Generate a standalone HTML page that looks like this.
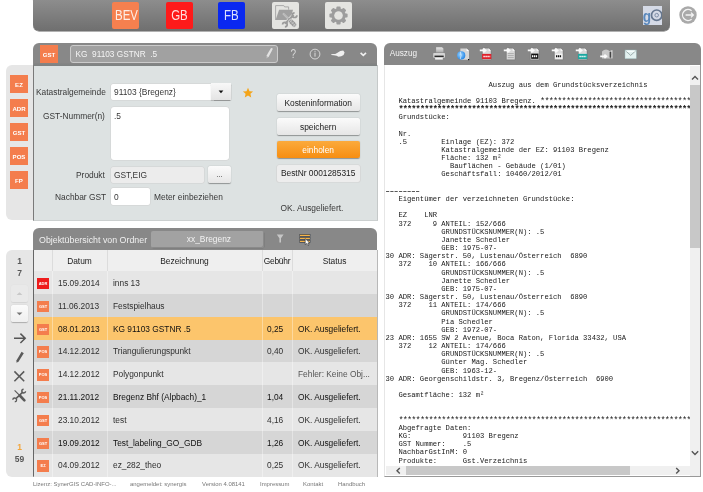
<!DOCTYPE html>
<html><head><meta charset="utf-8">
<style>
*{margin:0;padding:0;box-sizing:border-box}
html,body{width:703px;height:492px;overflow:hidden;background:#fff;font-family:"Liberation Sans",sans-serif;color:#333}
.a{position:absolute}
#topbar{left:33px;top:-6px;width:637px;height:37.4px;border-radius:6px;background:linear-gradient(#8d8d8d 6px,#6f6f6f);box-shadow:0 0.6px 0 #646464}
.tb{position:absolute;top:2px;width:27px;height:27px;border-radius:2px;color:#f2f2f2;font-size:14.5px;text-align:center;line-height:27px}
.tb b{display:inline-block;font-weight:normal;transform:scaleX(0.79);color:rgba(255,255,255,0.86)}
.hdr{background:#888}
.badge{position:absolute;width:18px;height:18px;background:#f47d4d;color:#fff;font-weight:bold;font-size:6.1px;text-align:center;line-height:20px}
.lbl{position:absolute;font-size:8.4px;color:#383838;white-space:nowrap}
.btn{position:absolute;left:276.5px;width:83.3px;height:17.4px;border-radius:2px;font-size:8.4px;text-align:center;line-height:18.6px;background:linear-gradient(#fbfbfb,#e6e6e6);box-shadow:0 0.5px 1px rgba(0,0,0,.35);color:#222}
.row{position:absolute;left:34px;width:343px;height:23px;font-size:8.35px;color:#303030}
.row span{position:absolute;top:0.9px;line-height:23px;white-space:nowrap}
.ic{position:absolute;left:3.3px;top:6.9px;width:11.5px;height:11.3px;background:#f47d4d;font-style:normal;font-size:4px;color:#fff;font-weight:bold;text-align:center;line-height:11px}
.mono{position:absolute;left:385.5px;top:80px;font-family:"Liberation Mono",monospace;font-size:7.17px;line-height:8.17px;white-space:pre;color:#202020}
.st{font-size:8.6px;letter-spacing:-0.86px;font-weight:bold;position:relative;top:1.2px}
.st2{font-size:8.6px;letter-spacing:-0.86px;font-weight:normal;position:relative;top:1.2px}
.ft{position:absolute;top:480.6px;font-size:5.95px;color:#777;white-space:nowrap}
#wrap{position:absolute;left:0;top:0;width:703px;height:492px;will-change:transform}
</style></head><body><div id="wrap">

<!-- top bar -->
<div id="topbar" class="a"></div>
<div class="tb" style="left:112px;background:#f5804f"><b>BEV</b></div>
<div class="tb" style="left:166px;background:#fe1a1a"><b>GB</b></div>
<div class="tb" style="left:218px;background:#0a28f0"><b>FB</b></div>
<div class="tb" style="left:272px;background:#e4e4e1">
<svg width="27" height="27" viewBox="0 0 27 27" style="position:absolute;left:0;top:0">
<path d="M3.6 18 V3.6 H11.8 L12.6 4.9 H16.6 V7.7" fill="none" stroke="#a3a3a3" stroke-width="0.9"/>
<path d="M7.1 7.7 H21 L18.1 18.1 H3.6 Z" fill="#a0a0a0"/>
<path d="M21.6 13 L13.2 21.8" stroke="#e4e4e1" stroke-width="3.6"/>
<path d="M11 11.4 L18 18.4" stroke="#cfcfcf" stroke-width="2"/>
<path d="M11 11.4 L18 18.4" stroke="#a0a0a0" stroke-width="0.8"/>
<path d="M21.6 13 L13.2 21.8" stroke="#9a9a9a" stroke-width="2.1"/>
<path d="M22.6 10.9 A2.3 2.3 0 1 0 24.9 13.2" fill="none" stroke="#9a9a9a" stroke-width="1.7"/>
<path d="M12.9 24.9 A2.3 2.3 0 1 0 10.6 22.6" fill="none" stroke="#9a9a9a" stroke-width="1.7"/>
<g transform="translate(20.6 21.1) rotate(45)">
<rect x="-4.6" y="-2.4" width="9.2" height="4.8" rx="2.3" fill="#999" stroke="#e4e4e1" stroke-width="0.7"/>
<path d="M-2.5 -2 V2 M0 -2 V2 M2.5 -2 V2 M-4 0 H4" stroke="#d6d6d6" stroke-width="0.6"/>
</g>
</svg></div>
<div class="tb" style="left:325px;background:#e4e4e1">
<svg width="27" height="27" viewBox="-13.5 -13.5 27 27" style="position:absolute;left:0;top:0">
<g fill="#9d9d9d">
<circle r="7.2"/>
<g id="tooth"><rect x="-2.1" y="-9.1" width="4.2" height="4" rx="1"/></g>
<use href="#tooth" transform="rotate(45)"/><use href="#tooth" transform="rotate(90)"/><use href="#tooth" transform="rotate(135)"/>
<use href="#tooth" transform="rotate(180)"/><use href="#tooth" transform="rotate(225)"/><use href="#tooth" transform="rotate(270)"/><use href="#tooth" transform="rotate(315)"/>
</g>
<circle r="4.3" fill="#e4e4e1"/>
</svg></div>
<div class="a" style="left:643px;top:5.6px;width:19px;height:19.2px;background:#d5dae6;overflow:hidden">
<svg width="19" height="19.2" viewBox="0 0 19 19.2" style="position:absolute;left:0;top:0">
<circle cx="13.7" cy="9.2" r="5.2" fill="none" stroke="#66778f" stroke-width="1.7"/>
<circle cx="13.7" cy="9.2" r="1.8" fill="none" stroke="#7586a0" stroke-width="0.9"/>
<text x="-0.4" y="15.6" font-family="Liberation Sans" font-weight="bold" font-size="17" fill="#5a88bc" transform="scale(0.8 1)">g</text>
</svg></div>
<svg class="a" style="left:678px;top:5px" width="20" height="20" viewBox="-10 -10 20 20">
<circle r="8.7" fill="#a9a9a9"/>
<path d="M3.6 -4.2 A5.5 5.5 0 1 0 3.6 4.2" fill="none" stroke="#f4f4f4" stroke-width="1.3"/>
<path d="M-2.4 0 H5.4 M3 -2.4 L5.4 0 L3 2.4" fill="none" stroke="#f4f4f4" stroke-width="1.3"/>
</svg>

<!-- panel 1 -->
<div class="a" style="left:6px;top:65px;width:40px;height:155px;background:#e6e6e6;border-radius:6px 0 0 6px"></div>
<div class="a hdr" style="left:33px;top:43px;width:344px;height:22px;border-radius:6px 6px 0 0"></div>
<div class="a" style="left:33px;top:65px;width:345px;height:155.5px;background:#dde2e2;border-left:1px solid #7a7a7a;border-right:1px solid #c5c9c9;border-bottom:1px solid #ccd0d0"></div>
<div class="a" style="left:34px;top:63.3px;width:343px;height:2.4px;background:linear-gradient(#858585,#7e8282)"></div>
<div class="badge" style="left:40px;top:45px">GST</div>

<div class="a" style="left:70px;top:45.3px;width:208px;height:17.6px;border:1.2px solid #cbcbcb;border-radius:3px;background:#a1a1a1;color:#f4f4f4;font-size:8.25px;line-height:17.4px;padding-left:4.6px">KG&nbsp; 91103 GSTNR&nbsp; .5</div>
<svg class="a" style="left:260px;top:43px" width="118" height="22" viewBox="0 0 118 22">
<path d="M7.4 13.6 L10.6 7.8" stroke="#e2e2e2" stroke-width="2.3"/><path d="M6.6 15.4 L7.9 13.9 L6.9 13.3 Z" fill="#d8d8d8"/><path d="M10.9 7.2 L11.6 6" stroke="#e2e2e2" stroke-width="2.1" stroke-linecap="round"/>
<text x="30.6" y="14.7" font-family="Liberation Sans" font-size="12.6" fill="#d8d8d8" transform="translate(30.6 0) scale(0.8 1) translate(-30.6 0)">?</text>
<circle cx="55" cy="11.1" r="4.9" fill="none" stroke="#dcdcdc" stroke-width="0.9"/>
<rect x="54.5" y="9.6" width="1" height="4" fill="#dcdcdc"/><rect x="54.5" y="7.8" width="1" height="1" fill="#dcdcdc"/>
<path d="M70.9 11.4 L72.8 10.9 L75.2 10.9 L77.1 10 L80.3 8.1 L83.2 7.6 L84.6 9.5 L83.6 11.9 L81.3 13.3 L78.5 13.7 L76.6 12.8 L73.8 12.3 L71.4 12.1 Z" fill="#f0f0f0"/>
<path d="M100.6 9.8 L103.3 12.4 L106 9.8" fill="none" stroke="#f0f0f0" stroke-width="1.6"/>
</svg>

<div class="badge" style="left:10px;top:75px">EZ</div>
<div class="badge" style="left:10px;top:99px">ADR</div>
<div class="badge" style="left:10px;top:123px">GST</div>
<div class="badge" style="left:10px;top:147px">POS</div>
<div class="badge" style="left:10px;top:171px">FP</div>

<div class="lbl" style="left:36px;top:87px">Katastralgemeinde</div>
<div class="a" style="left:110.8px;top:83.6px;width:120px;height:16.6px;background:#fff;border-radius:2px;box-shadow:0 0 0 0.5px #d0d0d0"></div>
<div class="lbl" style="left:114px;top:87px">91103 {Bregenz}</div>
<div class="a" style="left:210.8px;top:83.4px;width:20px;height:16.8px;background:linear-gradient(#f8f8f8,#e4e4e4);box-shadow:0 0.5px 1px rgba(0,0,0,.3)"></div>
<svg class="a" style="left:211px;top:83.4px" width="20" height="17"><path d="M7.6 7.6 H12.4 L10 10.2 Z" fill="#111"/></svg>
<svg class="a" style="left:242px;top:87px" width="12" height="12" viewBox="-6 -6 12 12"><path d="M0 -5.2 L1.5 -1.8 L5.1 -1.6 L2.4 0.8 L3.2 4.5 L0 2.6 L-3.2 4.5 L-2.4 0.8 L-5.1 -1.6 L-1.5 -1.8 Z" fill="#f4a418"/></svg>

<div class="lbl" style="left:43px;top:111px">GST-Nummer(n)</div>
<div class="a" style="left:110.5px;top:106.8px;width:118.3px;height:53px;background:#fff;border-radius:3px;box-shadow:0 0 0 0.5px #d0d0d0"></div>
<div class="lbl" style="left:114px;top:111px">.5</div>

<div class="lbl" style="left:76px;top:170px">Produkt</div>
<div class="a" style="left:110.7px;top:167.1px;width:93.7px;height:15.8px;background:#ececec;border-radius:2px;box-shadow:0 0 0 0.5px #d0d0d0"></div>
<div class="lbl" style="left:114px;top:170px">GST,EIG</div>
<div class="a" style="left:208.4px;top:166.3px;width:22.2px;height:17px;background:linear-gradient(#fbfbfb,#e6e6e6);box-shadow:0 0.5px 1px rgba(0,0,0,.35);border-radius:2px;font-size:8px;text-align:center;line-height:17px;color:#333">...</div>

<div class="lbl" style="left:55px;top:192px">Nachbar GST</div>
<div class="a" style="left:110.7px;top:188.4px;width:39.7px;height:16.6px;background:#fff;border-radius:2px;box-shadow:0 0 0 0.5px #d0d0d0"></div>
<div class="lbl" style="left:114px;top:192px">0</div>
<div class="lbl" style="left:154px;top:192px">Meter einbeziehen</div>

<div class="btn" style="top:94px">Kosteninformation</div>
<div class="btn" style="top:118px">speichern</div>
<div class="btn" style="top:141px;background:linear-gradient(#fbaa3c,#f78e12);color:#fff">einholen</div>
<div class="btn" style="top:164.8px;background:#ededed;box-shadow:0 0 0 0.6px #d2d2d2;line-height:17.6px">BestNr 0001285315</div>
<div class="lbl" style="left:280.6px;top:202.6px">OK. Ausgeliefert.</div>

<!-- panel 2 -->
<div class="a" style="left:6px;top:250px;width:40px;height:227px;background:#e6e6e6;border-radius:6px 0 0 6px"></div>
<div class="a hdr" style="left:33px;top:228px;width:344px;height:22px;border-radius:6px 6px 0 0"></div>
<div class="a" style="left:33px;top:250px;width:345.2px;height:227px;background:#e6e6e6;border-left:1px solid #666;border-right:1px solid #b8b8b8;border-bottom:1px solid #b8b8b8"></div>
<div class="a" style="left:39px;top:234.5px;font-size:8.85px;color:#f0f0f0;white-space:nowrap">Objektübersicht von Ordner</div>
<div class="a" style="left:151.4px;top:231.1px;width:113px;height:16.7px;background:#a2a2a2;border-radius:2px;box-shadow:inset -1px -1px 0 #8a8a8a, 0.5px 0.5px 0.5px #777;color:#f2f2f2;font-size:8.4px;line-height:17px;text-align:center;padding-left:2px">xx_Bregenz</div>
<svg class="a" style="left:270px;top:228px" width="50" height="22" viewBox="0 0 50 22">
<path d="M6.8 6.4 H13.6 L11 10.2 V14.6 H9.4 V10.2 Z" fill="#c6c6c6"/>
<g stroke="#3f4650" stroke-width="2.6"><path d="M29.4 7.4 H40.4 M29.4 10.4 H40.4 M29.4 13.4 H40.4"/></g>
<g stroke="#f6b448" stroke-width="1.2"><path d="M29.9 7.4 H39.9 M29.9 10.4 H39.9 M29.9 13.4 H39.9"/></g>
<path d="M35.2 10.6 V16.6 L36.6 15.4 L38 17.6 L39 17 L37.8 15 L39.6 14.8 Z" fill="#fff" stroke="#333" stroke-width="0.6"/>
</svg>

<!-- table header -->
<div class="a" style="left:34px;top:250px;width:343px;height:21px;background:#f0f0f0"></div>
<div class="row" style="top:271.2px;background:#e6e6e6"><i class="ic" style="background:#ee1c1c">ADR</i><span style="left:24px">15.09.2014</span><span style="left:79px">inns 13</span><span style="left:233px"></span><span style="left:264px"></span></div>
<div class="row" style="top:294.0px;background:#d6d6d6"><i class="ic" style="background:#f47d4d">GST</i><span style="left:24px">11.06.2013</span><span style="left:79px">Festspielhaus</span><span style="left:233px"></span><span style="left:264px"></span></div>
<div class="row" style="top:316.8px;background:#fcc56c;color:#111"><i class="ic" style="background:#f47d4d">GST</i><span style="left:24px">08.01.2013</span><span style="left:79px">KG 91103 GSTNR .5</span><span style="left:233px">0,25</span><span style="left:264px">OK. Ausgeliefert.</span></div>
<div class="row" style="top:339.6px;background:#d6d6d6"><i class="ic" style="background:#f47d4d">POS</i><span style="left:24px">14.12.2012</span><span style="left:79px">Triangulierungspunkt</span><span style="left:233px">0,40</span><span style="left:264px">OK. Ausgeliefert.</span></div>
<div class="row" style="top:362.4px;background:#e6e6e6"><i class="ic" style="background:#f47d4d">POS</i><span style="left:24px">14.12.2012</span><span style="left:79px">Polygonpunkt</span><span style="left:233px"></span><span style="left:264px;color:#555">Fehler: Keine Obj...</span></div>
<div class="row" style="top:385.2px;background:#d6d6d6;color:#111"><i class="ic" style="background:#f47d4d">POS</i><span style="left:24px">21.11.2012</span><span style="left:79px">Bregenz Bhf (Alpbach)_1</span><span style="left:233px">1,04</span><span style="left:264px">OK. Ausgeliefert.</span></div>
<div class="row" style="top:408.0px;background:#e6e6e6"><i class="ic" style="background:#f47d4d">GST</i><span style="left:24px">23.10.2012</span><span style="left:79px">test</span><span style="left:233px">4,16</span><span style="left:264px">OK. Ausgeliefert.</span></div>
<div class="row" style="top:430.8px;background:#d6d6d6;color:#111"><i class="ic" style="background:#f47d4d">GST</i><span style="left:24px">19.09.2012</span><span style="left:79px">Test_labeling_GO_GDB</span><span style="left:233px">1,26</span><span style="left:264px">OK. Ausgeliefert.</span></div>
<div class="row" style="top:453.6px;background:#e6e6e6"><i class="ic" style="background:#f47d4d">EZ</i><span style="left:24px">04.09.2012</span><span style="left:79px">ez_282_theo</span><span style="left:233px">0,25</span><span style="left:264px">OK. Ausgeliefert.</span></div>
<!-- th -->
<div class="a" style="left:34px;top:249.6px;width:343px;height:21.4px;background:#efefef;font-size:8.4px;color:#222;line-height:22.8px">
<span class="a" style="left:18px;top:0;width:55px;text-align:center">Datum</span>
<span class="a" style="left:73px;top:0;width:155px;text-align:center">Bezeichnung</span>
<span class="a" style="left:228px;top:0;width:30px;text-align:center;letter-spacing:-0.2px">Gebühr</span>
<span class="a" style="left:258px;top:0;width:85px;text-align:center">Status</span>
</div>
<div class="a" style="left:52px;top:249.6px;width:1px;height:227px;background:rgba(255,255,255,0.35)"></div>
<div class="a" style="left:107px;top:249.6px;width:1px;height:227px;background:rgba(255,255,255,0.35)"></div>
<div class="a" style="left:262px;top:249.6px;width:1px;height:227px;background:rgba(255,255,255,0.35)"></div>
<div class="a" style="left:292px;top:249.6px;width:1px;height:227px;background:rgba(255,255,255,0.35)"></div>

<div class="a" style="left:52px;top:249.6px;width:1px;height:21.4px;background:#dcdcdc"></div><div class="a" style="left:107px;top:249.6px;width:1px;height:21.4px;background:#dcdcdc"></div><div class="a" style="left:262px;top:249.6px;width:1px;height:21.4px;background:#dcdcdc"></div><div class="a" style="left:292px;top:249.6px;width:1px;height:21.4px;background:#dcdcdc"></div>
<!-- sidebar 2 -->
<div class="a" style="left:6px;top:255px;width:27px;font-size:8.5px;color:#575757;font-weight:bold;text-align:center;line-height:12px">1<br>7</div>
<div class="a" style="left:11px;top:284.8px;width:17px;height:17.2px;border-radius:2px;background:#e9e9e9;box-shadow:0 0.5px 1px rgba(0,0,0,0.08)"><svg width="17" height="17"><path d="M5.6 10 L8.5 7.2 L11.4 10 Z" fill="#c8c8c8"/></svg></div>
<div class="a" style="left:11px;top:305px;width:17px;height:17px;border-radius:2px;background:linear-gradient(#fbfbfb,#efefef);box-shadow:0 0.5px 1px rgba(0,0,0,0.25)"><svg width="17" height="17"><path d="M5.6 7.4 H11.4 L8.5 10.2 Z" fill="#777"/></svg></div>
<svg class="a" style="left:6px;top:326px" width="27" height="80" viewBox="6 326 27 80">
<g fill="none" stroke="#555" stroke-width="1.5">
<path d="M14 338.3 H25.2 M20.4 333.6 L25.2 338.3 L20.4 343"/>
</g>
<g fill="none" stroke="#5a5a5a" stroke-width="1.55">
<path d="M14.4 371.4 L24.2 381.2 M14.4 381.2 L24.2 371.4"/>
</g>
<path d="M21.6 351.8 L23.8 353.2 L18.6 361.4 L16.6 362.8 L16.4 360.4 Z" fill="#5a5a5a"/>
<path d="M14.6 390.4 L20.6 396.4" stroke="#5a5a5a" stroke-width="1.1"/>
<path d="M20.2 396 L24.4 400.4" stroke="#5a5a5a" stroke-width="2.6" stroke-linecap="round"/>
<path d="M22.2 392.6 L16.2 398.4" stroke="#5a5a5a" stroke-width="1.5"/>
<path d="M23.6 389.2 A1.9 1.9 0 1 0 25.6 391.2" fill="none" stroke="#5a5a5a" stroke-width="1.4"/>
<path d="M14.8 401.8 A1.9 1.9 0 1 0 12.8 399.8" fill="none" stroke="#5a5a5a" stroke-width="1.4"/>
</svg>
<div class="a" style="left:6px;top:441px;width:27px;font-size:8.5px;color:#f3a53a;font-weight:bold;text-align:center;line-height:12px">1</div>
<div class="a" style="left:6px;top:453px;width:27px;font-size:8.5px;color:#575757;font-weight:bold;text-align:center;line-height:12px">59</div>

<!-- right panel -->
<div class="a hdr" style="left:384px;top:43px;width:317px;height:22px;border-radius:6px 6px 0 0"></div>
<div class="a" style="left:384px;top:65px;width:317px;height:412px;background:#fff;border-left:1.8px solid #e6e6e6;border-right:1px solid #999;border-bottom:1px solid #999"></div>
<div class="a" style="left:389.7px;top:48.5px;font-size:8.2px;color:#f4f4f4">Auszug</div>
<svg class="a" style="left:384px;top:0" width="317" height="65" viewBox="384 0 317 65"><defs><linearGradient id="pg" x1="0" y1="0" x2="0" y2="1"><stop offset="0" stop-color="#e8e8e8"/><stop offset="1" stop-color="#a8a8a8"/></linearGradient><radialGradient id="gl" cx="0.4" cy="0.4" r="0.6"><stop offset="0" stop-color="#9fd6ff"/><stop offset="1" stop-color="#2a8ae8"/></radialGradient></defs><path d="M436.1 47.2 H442 L443.4 48.6 V52.6 H436.1 Z" fill="url(#pg)"/><rect x="433.2" y="53" width="11.8" height="4.8" rx="0.8" fill="#d4d4d4"/><rect x="434.5" y="55.6" width="9.2" height="1.5" fill="#2a2a2a"/><rect x="435.1" y="57.6" width="7.7" height="2" fill="#f2f2f2"/><path d="M460.4 48.5 H466.6 L469 50.9 V59.7 H460.4 Z" fill="#d6d6d6"/><path d="M466.6 48.5 V50.9 H469 Z" fill="#fff"/><rect x="468" y="59" width="1.2" height="1.2" fill="#111"/><circle cx="461.2" cy="55.4" r="4.1" fill="url(#gl)"/><path d="M460.3 51.8 Q461.8 55.4 460.3 59" stroke="#e6f4ff" stroke-width="0.7" fill="none"/><g transform="translate(479.8 0)"><path d="M2.6 48.2 H8.8 L11.2 50.8 V59.7 H2.6 Z" fill="#d9d9d9" stroke="#555" stroke-width="0.3"/><path d="M8.8 48.2 V50.8 H11.2 Z" fill="#fff"/><rect x="2.3" y="53.9" width="9.2" height="5.2" fill="#e0202a"/><path d="M3.6 56.5 H10.4" stroke="#fff" stroke-width="1.6" stroke-dasharray="1.4 0.6"/><path d="M0 50.4 H5 M3.4 48.6 L5.6 50.4 L3.4 52.2" fill="none" stroke="#fafafa" stroke-width="1.9"/></g><g transform="translate(503.8 0)"><path d="M2.6 48.2 H8.8 L11.2 50.8 V59.7 H2.6 Z" fill="#d9d9d9" stroke="#555" stroke-width="0.3"/><path d="M8.8 48.2 V50.8 H11.2 Z" fill="#fff"/><path d="M4 53.6 H10 M4 55.6 H10 M4 57.6 H10" stroke="#999" stroke-width="0.7"/><path d="M0 50.4 H5 M3.4 48.6 L5.6 50.4 L3.4 52.2" fill="none" stroke="#fafafa" stroke-width="1.9"/></g><g transform="translate(527.8 0)"><path d="M2.6 48.2 H8.8 L11.2 50.8 V59.7 H2.6 Z" fill="#d9d9d9" stroke="#555" stroke-width="0.3"/><path d="M8.8 48.2 V50.8 H11.2 Z" fill="#fff"/><rect x="3.4" y="53.6" width="7.2" height="5.2" fill="#111"/><path d="M4.2 56.2 H9.8" stroke="#fff" stroke-width="2" stroke-dasharray="1.3 0.6"/><path d="M0 50.4 H5 M3.4 48.6 L5.6 50.4 L3.4 52.2" fill="none" stroke="#fafafa" stroke-width="1.9"/></g><g transform="translate(551.8 0)"><path d="M2.6 48.2 H8.8 L11.2 50.8 V59.7 H2.6 Z" fill="#d9d9d9" stroke="#555" stroke-width="0.3"/><path d="M8.8 48.2 V50.8 H11.2 Z" fill="#fff"/><rect x="3.4" y="53.6" width="7.2" height="5.2" fill="#f4f4f4"/><path d="M4.2 56.2 H9.8" stroke="#111" stroke-width="2" stroke-dasharray="1.3 0.6"/><path d="M0 50.4 H5 M3.4 48.6 L5.6 50.4 L3.4 52.2" fill="none" stroke="#fafafa" stroke-width="1.9"/></g><g transform="translate(575.8 0)"><path d="M2.6 48.2 H8.8 L11.2 50.8 V59.7 H2.6 Z" fill="#d9d9d9" stroke="#555" stroke-width="0.3"/><path d="M8.8 48.2 V50.8 H11.2 Z" fill="#fff"/><rect x="2.3" y="53.9" width="9.2" height="5.2" fill="#1aa8a0"/><path d="M3.6 56.5 H10.4" stroke="#fff" stroke-width="1.6" stroke-dasharray="1.4 0.6"/><path d="M0 50.4 H5 M3.4 48.6 L5.6 50.4 L3.4 52.2" fill="none" stroke="#fafafa" stroke-width="1.9"/></g><path d="M602 51.4 Q606 47.6 610 51.4 V58.4 H602 Z" fill="#c8c8c8"/><path d="M610.6 50.2 H612.6 V58.4 H610.6 Z" fill="#cfcfcf"/><rect x="609.6" y="52" width="1.6" height="5.6" fill="#444"/><path d="M600.2 56.3 H606 M604.4 54.6 L606.4 56.3 L604.4 58" fill="none" stroke="#fafafa" stroke-width="1.7"/><rect x="625" y="50" width="11.3" height="8.7" fill="#e3f1f0" stroke="#9bb" stroke-width="0.4"/><path d="M625.6 50.8 L630.65 55.4 L635.7 50.8" fill="none" stroke="#8a9a9a" stroke-width="0.8"/><rect x="626.6" y="50.6" width="8" height="1.2" fill="#fbffff"/></svg>
<div class="a" style="left:386px;top:65px;width:304px;height:401px;overflow:hidden"><div class="mono" style="left:-0.5px;top:15.6px">                        Auszug aus dem Grundstücksverzeichnis

   Katastralgemeinde 91103 Bregenz. <b class="st2">************************************************************</b>
   <b class="st">****************************************************************************************</b>
   Grundstücke:

   Nr.
   .5        Einlage (EZ): 372
             Katastralgemeinde der EZ: 91103 Bregenz
             Fläche: 132 m²
               Bauflächen - Gebäude (1/01)
             Geschäftsfall: 10460/2012/01

<b style="font-weight:bold">––––––––</b>
   Eigentümer der verzeichneten Grundstücke:

   EZ    LNR
   372     9 ANTEIL: 152/666
             GRUNDSTÜCKSNUMMER(N): .5
             Janette Schedler
             GEB: 1975-07-
30 ADR: Sägerstr. 50, Lustenau/Österreich  6890
   372    10 ANTEIL: 166/666
             GRUNDSTÜCKSNUMMER(N): .5
             Janette Schedler
             GEB: 1975-07-
30 ADR: Sägerstr. 50, Lustenau/Österreich  6890
   372    11 ANTEIL: 174/666
             GRUNDSTÜCKSNUMMER(N): .5
             Pia Schedler
             GEB: 1972-07-
23 ADR: 1655 SW 2 Avenue, Boca Raton, Florida 33432, USA
   372    12 ANTEIL: 174/666
             GRUNDSTÜCKSNUMMER(N): .5
             Günter Mag. Schedler
             GEB: 1963-12-
30 ADR: Georgenschildstr. 3, Bregenz/Österreich  6900

   Gesamtfläche: 132 m²


   <b class="st2">********************************************************************************</b>
   Abgefragte Daten:
   KG:            91103 Bregenz
   GST Nummer:    .5
   NachbarGstInM: 0
   Produkte:      Gst.Verzeichnis</div></div>


<!-- scrollbars -->
<div class="a" style="left:690px;top:65.7px;width:10px;height:410px;background:#f0f0f0"></div>
<div class="a" style="left:690px;top:85.2px;width:10px;height:163.2px;background:#c8c8c8"></div>
<div class="a" style="left:385.8px;top:465.8px;width:304.2px;height:9.6px;background:#f0f0f0"></div>
<div class="a" style="left:406px;top:465.8px;width:224px;height:9.6px;background:#c8c8c8"></div>
<svg class="a" style="left:384px;top:60px" width="317" height="420" viewBox="384 60 317 420">
<g fill="none" stroke="#555" stroke-width="1.4">
<path d="M692 79.6 L695 76.6 L698 79.6"/>
<path d="M691.8 451.2 L695 454.4 L698.2 451.2"/>
<path d="M399.8 468 L397 470.8 L399.8 473.6"/>
<path d="M676.2 468 L679 470.8 L676.2 473.6"/>
</g>
</svg>
<!-- footer -->
<div class="ft" style="left:33px">Lizenz: SynerGIS CAD-INFO-...</div>
<div class="ft" style="left:130px">angemeldet: synergis</div>
<div class="ft" style="left:202px">Version 4.08141</div>
<div class="ft" style="left:260px">Impressum</div>
<div class="ft" style="left:303px">Kontakt</div>
<div class="ft" style="left:338px">Handbuch</div>
</div></body></html>
